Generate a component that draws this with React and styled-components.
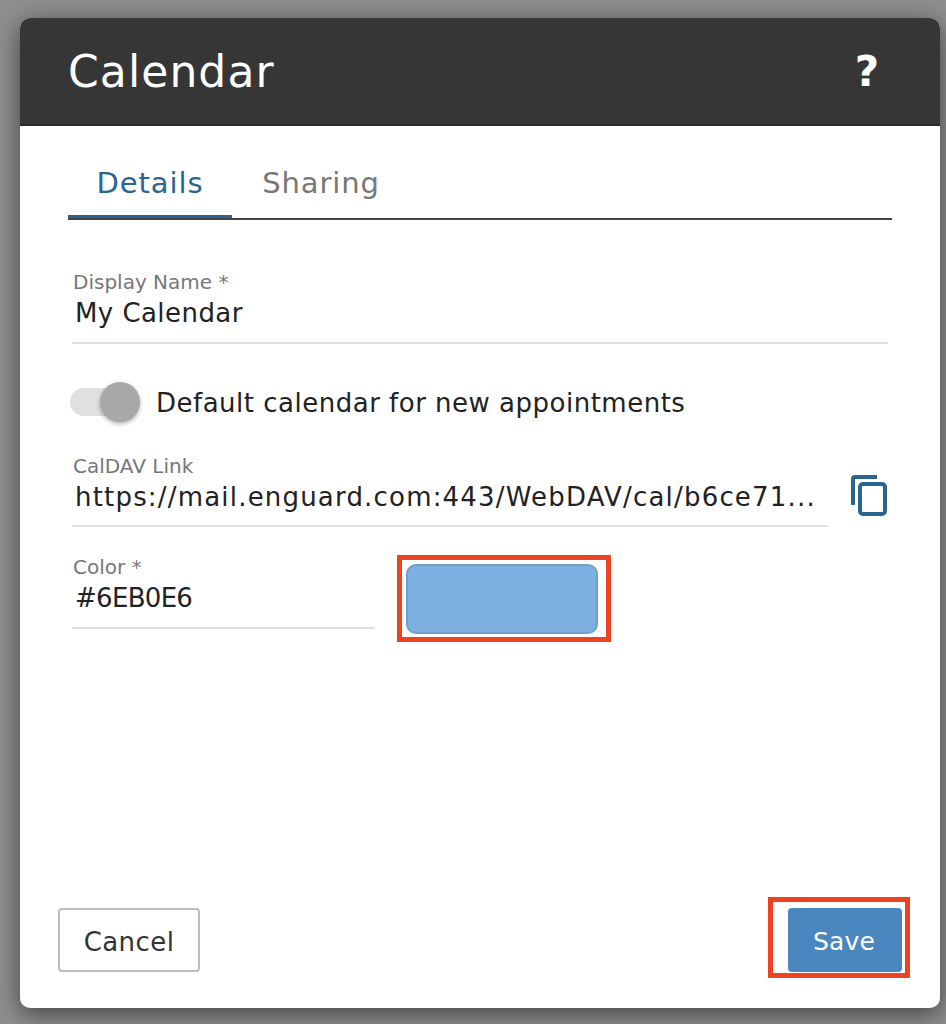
import React from "react";
import styled, { createGlobalStyle } from "styled-components";

const Global = createGlobalStyle`
  html, body {
    margin: 0;
    padding: 0;
    background: #8a8a8a;
  }
  body {
    font-family: "DejaVu Sans", "Noto Sans", sans-serif;
    overflow: hidden;
  }
`;

const Backdrop = styled.div`
  width: 946px;
  height: 1024px;
  box-sizing: border-box;
  padding: 18px 6px 16px 20px;
  background: #8f8f8f;
`;

const Dialog = styled.div`
  width: 920px;
  height: 990px;
  background: #fff;
  border-radius: 10px;
  overflow: hidden;
  display: flex;
  flex-direction: column;
  box-shadow: 0 6px 26px rgba(0, 0, 0, 0.55);
`;

const Header = styled.header`
  height: 108px;
  flex: none;
  box-sizing: border-box;
  background: #363636;
  border-bottom: 2px solid #2c2c2c;
  padding: 0 61px 0 48px;
  display: flex;
  align-items: center;
  justify-content: space-between;
  color: #fff;
`;

const Title = styled.h1`
  margin: 0;
  font-size: 44px;
  font-weight: 400;
  letter-spacing: 1.1px;
`;

const Help = styled.span`
  font-size: 42px;
  font-weight: 700;
`;

const Body = styled.div`
  flex: 1;
  padding: 0 48px;
  display: flex;
  flex-direction: column;
`;

const Tabs = styled.div`
  margin-top: 32px;
  height: 60px;
  width: 824px;
  display: flex;
  border-bottom: 2px solid #444;
`;

const Tab = styled.div`
  width: ${(p) => p.$width}px;
  height: 60px;
  box-sizing: border-box;
  padding-top: 8px;
  text-align: center;
  font-size: 29px;
  letter-spacing: 0.9px;
  color: ${(p) => (p.$active ? "#2a6592" : "#777")};
  border-bottom: ${(p) => (p.$active ? "3px solid #2a6592" : "none")};
`;

const Field = styled.div`
  width: ${(p) => p.$width}px;
  box-sizing: border-box;
  border-bottom: 2px solid #e0e0e0;
  padding-bottom: ${(p) => p.$bottom ?? 10}px;
`;

const Label = styled.div`
  font-size: 20px;
  line-height: 23px;
  color: #777;
  padding-left: 1px;
`;

const Value = styled.div`
  font-size: 26px;
  line-height: 38px;
  color: #222;
  letter-spacing: ${(p) => p.$spacing ?? 0.44}px;
  padding-left: 3px;
  white-space: nowrap;
`;

const NameRow = styled.div`
  margin-top: 51px;
  padding-left: 4px;
`;

const ToggleRow = styled.div`
  margin-top: 42px;
  display: flex;
  align-items: center;
  padding-left: 2px;
  gap: 16px;
`;

const Toggle = styled.div`
  position: relative;
  width: 70px;
  height: 28px;
  border-radius: 14px;
  background: #e0e0e0;
`;

const Knob = styled.div`
  position: absolute;
  right: 0;
  top: -6px;
  width: 40px;
  height: 40px;
  border-radius: 50%;
  background: #a8a8a8;
  box-shadow: 0 2px 4px rgba(0, 0, 0, 0.3);
`;

const ToggleText = styled.span`
  padding-top: 2px;
  font-size: 26px;
  letter-spacing: 0.5px;
  color: #222;
`;

const LinkRow = styled.div`
  margin-top: 37px;
  padding-left: 4px;
  display: flex;
  align-items: flex-start;
  gap: 23px;
`;

const CopyIcon = styled.svg`
  margin-top: 20px;
  width: 36px;
  height: 41px;
  flex: none;
`;

const ColorRow = styled.div`
  margin-top: 29px;
  padding-left: 4px;
  display: flex;
  align-items: flex-start;
  gap: 23px;
`;

const Highlight = styled.div`
  margin-top: ${(p) => p.$top || 0}px;
  border: 5px solid #ee4323;
  box-sizing: border-box;
  padding: ${(p) => p.$padding};
`;

const Swatch = styled.div`
  width: 192px;
  height: 70px;
  box-sizing: border-box;
  background: #7eb0e2;
  border: 2px solid #6f9fcc;
  border-radius: 10px;
`;

const Footer = styled.div`
  margin-top: auto;
  height: 111px;
  margin-left: -10px;
  margin-right: -18px;
  display: flex;
  align-items: flex-start;
  justify-content: space-between;
`;

const CancelButton = styled.button`
  margin-top: 11px;
  width: 142px;
  height: 64px;
  padding: 3px 0 0;
  background: #fff;
  border: 2px solid #bcbcbc;
  border-radius: 4px;
  font-family: inherit;
  font-size: 26px;
  letter-spacing: 0.44px;
  color: #333;
`;

const SaveButton = styled.button`
  display: block;
  width: 114px;
  height: 64px;
  padding: 3px 2px 0 0;
  background: #4a87be;
  border: none;
  border-radius: 4px;
  font-family: inherit;
  font-size: 25px;
  letter-spacing: 0.2px;
  color: #fff;
`;

export default function App() {
  return (
    <Backdrop>
      <Global />
      <Dialog>
        <Header>
          <Title>Calendar</Title>
          <Help>?</Help>
        </Header>
        <Body>
          <Tabs>
            <Tab $active $width={164}>Details</Tab>
            <Tab $width={178}>Sharing</Tab>
          </Tabs>
          <NameRow>
            <Field $width={816}>
              <Label>Display Name *</Label>
              <Value>My Calendar</Value>
            </Field>
          </NameRow>
          <ToggleRow>
            <Toggle>
              <Knob />
            </Toggle>
            <ToggleText>Default calendar for new appointments</ToggleText>
          </ToggleRow>
          <LinkRow>
            <Field $width={756} $bottom={9}>
              <Label>CalDAV Link</Label>
              <Value $spacing={1.19}>https://mail.enguard.com:443/WebDAV/cal/b6ce71...</Value>
            </Field>
            <CopyIcon viewBox="0 0 36 41" fill="none" stroke="#2a6592" strokeWidth="4">
              <path d="M26 2H4a2 2 0 0 0-2 2v26" />
              <rect x="9" y="9" width="25" height="30" rx="3" />
            </CopyIcon>
          </LinkRow>
          <ColorRow>
            <Field $width={302}>
              <Label>Color *</Label>
              <Value $spacing={-0.7}>#6EB0E6</Value>
            </Field>
            <Highlight $top={-1} $padding="4px 8px 3px 4px">
              <Swatch />
            </Highlight>
          </ColorRow>
          <Footer>
            <CancelButton>Cancel</CancelButton>
            <Highlight $padding="6px 3px 1px 15px">
              <SaveButton>Save</SaveButton>
            </Highlight>
          </Footer>
        </Body>
      </Dialog>
    </Backdrop>
  );
}
